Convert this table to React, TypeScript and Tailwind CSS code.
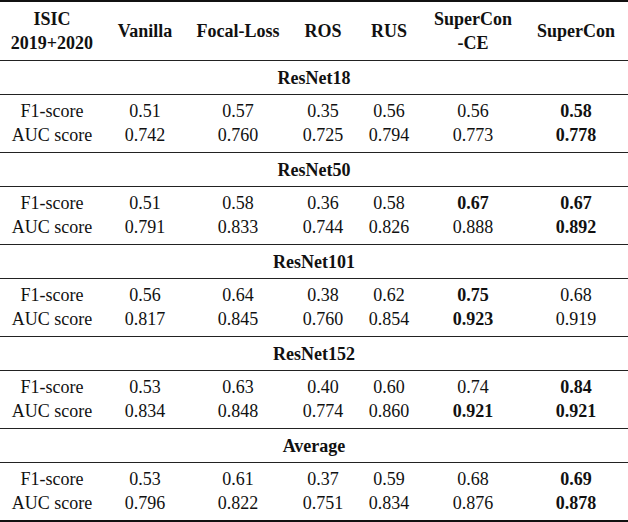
const cols = "grid grid-cols-[104px_82px_104px_66px_66px_102px_104px]";

type Cell = { v: string; b?: boolean };

interface Section {
  name: string;
  f1: Cell[];
  auc: Cell[];
}

const c = (v: string, b = false): Cell => ({ v, b });

const sections: Section[] = [
  {
    name: "ResNet18",
    f1: [c("0.51"), c("0.57"), c("0.35"), c("0.56"), c("0.56"), c("0.58", true)],
    auc: [c("0.742"), c("0.760"), c("0.725"), c("0.794"), c("0.773"), c("0.778", true)],
  },
  {
    name: "ResNet50",
    f1: [c("0.51"), c("0.58"), c("0.36"), c("0.58"), c("0.67", true), c("0.67", true)],
    auc: [c("0.791"), c("0.833"), c("0.744"), c("0.826"), c("0.888"), c("0.892", true)],
  },
  {
    name: "ResNet101",
    f1: [c("0.56"), c("0.64"), c("0.38"), c("0.62"), c("0.75", true), c("0.68")],
    auc: [c("0.817"), c("0.845"), c("0.760"), c("0.854"), c("0.923", true), c("0.919")],
  },
  {
    name: "ResNet152",
    f1: [c("0.53"), c("0.63"), c("0.40"), c("0.60"), c("0.74"), c("0.84", true)],
    auc: [c("0.834"), c("0.848"), c("0.774"), c("0.860"), c("0.921", true), c("0.921", true)],
  },
  {
    name: "Average",
    f1: [c("0.53"), c("0.61"), c("0.37"), c("0.59"), c("0.68"), c("0.69", true)],
    auc: [c("0.796"), c("0.822"), c("0.751"), c("0.834"), c("0.876"), c("0.878", true)],
  },
];

function DataRow({ label, cells }: { label: string; cells: Cell[] }) {
  return (
    <div className={`${cols} h-6 items-center`}>
      <div className="text-center">{label}</div>
      {cells.map((cell, i) => (
        <div key={i} className={cell.b ? "text-center font-bold" : "text-center"}>
          {cell.v}
        </div>
      ))}
    </div>
  );
}

export default function App() {
  return (
    <div className="w-[628px] h-[522px] bg-white text-[#111] text-[18px] leading-6 font-['Liberation_Serif','Times_New_Roman',serif]">
      <div className="border-t-2 border-b-2 border-[#111]">
        {/* header */}
        <div className={`${cols} h-[59px] items-center font-bold border-b border-[#222]`}>
          <div className="text-center">
            ISIC
            <br />
            2019+2020
          </div>
          <div className="text-center">Vanilla</div>
          <div className="text-center">Focal-Loss</div>
          <div className="text-center">ROS</div>
          <div className="text-center">RUS</div>
          <div className="text-center">
            SuperCon
            <br />
            -CE
          </div>
          <div className="text-center">SuperCon</div>
        </div>

        {sections.map((s, i) => (
          <div key={s.name}>
            <div className="h-[34px] flex items-center justify-center font-bold border-b border-[#222]">
              {s.name}
            </div>
            <div
              className={
                i < sections.length - 1
                  ? "h-[58px] pt-1 border-b border-[#222]"
                  : "h-[57px] pt-1"
              }
            >
              <DataRow label="F1-score" cells={s.f1} />
              <DataRow label="AUC score" cells={s.auc} />
            </div>
          </div>
        ))}
      </div>
    </div>
  );
}
